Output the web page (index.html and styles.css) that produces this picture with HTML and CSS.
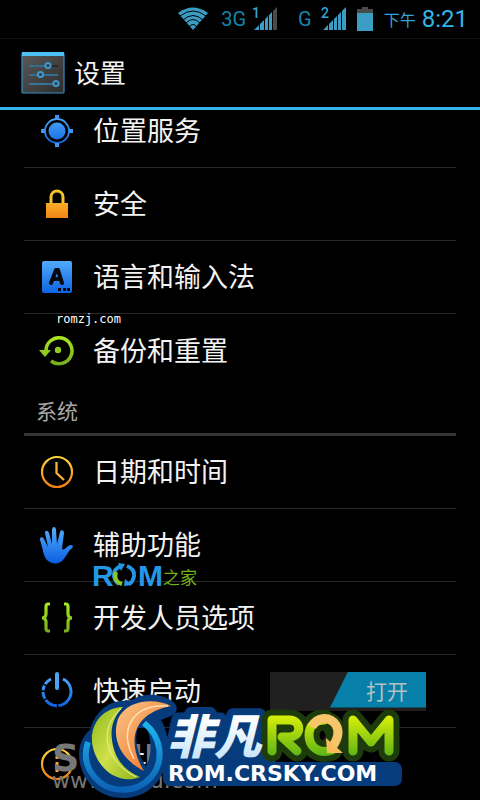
FILE: index.html
```
<!DOCTYPE html>
<html lang="zh-CN">
<head>
  <meta charset="UTF-8">
  <meta name="viewport" content="width=device-width, initial-scale=1.0">
  <title>设置</title>
  <link rel="stylesheet" href="styles.css">
</head>
<body>
  <!-- Shared gradients -->
  <svg class="defs" width="0" height="0" aria-hidden="true">
    <defs>
      <linearGradient id="blue" x1="0" y1="0" x2="0" y2="36" gradientUnits="userSpaceOnUse"><stop offset="0" stop-color="#55aefc"/><stop offset="1" stop-color="#0a5fe0"/></linearGradient>
      <linearGradient id="orange" x1="0" y1="0" x2="0" y2="36" gradientUnits="userSpaceOnUse"><stop offset="0" stop-color="#ffdc3c"/><stop offset="1" stop-color="#f07a10"/></linearGradient>
      <linearGradient id="green" x1="0" y1="0" x2="0" y2="36" gradientUnits="userSpaceOnUse"><stop offset="0" stop-color="#b0f01e"/><stop offset="1" stop-color="#6fa51c"/></linearGradient>
    </defs>
  </svg>

  <div class="screen">
    <div class="status-bar">
      <svg class="wifi" width="32" height="24" viewBox="0 0 32 24">
        <path d="M1 6Q16-5 31 6L16 23Z" fill="#3b9cc4"/>
        <path d="M3 9Q16-1 29 9M6 13Q16 4 26 13M9 16Q16 9 23 16M12 20Q16 15 20 20" fill="none" stroke="#000" stroke-width="1"/>
      </svg>
      <span class="network net-3g">3G</span>
      <svg class="signal" width="26" height="24" viewBox="0 0 26 24">
        <text x="0" y="11" class="sim">1</text>
        <path d="M2 23L7 18V23ZM8 17L12 13V23H8ZM13 12L16 9V23H13ZM17 8L20 5V23H17Z" fill="#3b9cc4"/>
        <path d="M21 4L25 0V23H21Z" fill="#4a4a4a"/>
      </svg>
      <span class="network net-g">G</span>
      <svg class="signal" width="26" height="24" viewBox="0 0 26 24">
        <text x="0" y="11" class="sim">2</text>
        <path d="M2 23L7 18V23ZM8 17L12 13V23H8ZM13 12L16 9V23H13ZM17 8L20 5V23H17ZM21 4L25 0V23H21Z" fill="#3b9cc4"/>
      </svg>
      <svg class="battery" width="16" height="24" viewBox="0 0 16 24">
        <path d="M5 0H11V2H16V6H0V2H5Z" fill="#4a4a4a"/>
        <path d="M0 6H16V24H0Z" fill="#3b9cc4"/>
      </svg>
      <span class="ampm">下午</span>
      <span class="clock">8:21</span>
    </div>

    <header class="title-bar">
      <svg width="44" height="42" viewBox="0 0 44 42">
        <defs><linearGradient id="panel" x1="0" y1="0" x2="1" y2="1"><stop offset="0" stop-color="#5a5a5a"/><stop offset="1" stop-color="#2c2c2c"/></linearGradient></defs>
        <rect x="1" y="1" width="42" height="40" rx="1" fill="url(#panel)" stroke="#348fc7" stroke-width="1.2"/>
        <path d="M1 0H43V4H1Z" fill="#4fc0f4"/>
        <path d="M8 14H37M8 23H37" stroke="#222" stroke-width="1.5"/>
        <path d="M8 14H24M8 23H17M22 23H37M8 32H32" stroke="#3585b5" stroke-width="1.5"/>
        <g fill="#343c42" stroke="#4197cc" stroke-width="2"><circle cx="27" cy="13.5" r="2.6"/><circle cx="19.5" cy="22.5" r="2.6"/><circle cx="35" cy="31.5" r="2.6"/></g>
      </svg>
      <h1>设置</h1>
    </header>

    <main class="settings">
      <ul class="list">
        <li><a href="#location">
          <svg class="icon" viewBox="0 0 36 36"><circle cx="18" cy="18" r="12" fill="none" stroke="url(#blue)" stroke-width="1.8"/><path d="M18 2V6M18 30V34M2 18H6M30 18H34" stroke="#3d96f5" stroke-width="4"/><circle cx="18" cy="18" r="8.5" fill="url(#blue)"/></svg>
          <span>位置服务</span></a></li>
        <li><a href="#security">
          <svg class="icon" viewBox="0 0 36 36"><path d="M12 18V11C12 3 24 3 24 11V18" fill="none" stroke="#f5c42c" stroke-width="3"/><path d="M7 17H29V32H7Z" fill="url(#orange)"/></svg>
          <span>安全</span></a></li>
        <li><a href="#language">
          <svg class="icon" viewBox="0 0 36 36"><rect x="3" y="2" width="30" height="32" rx="2" fill="url(#blue)"/><path d="M12 24L17 11H19L23 24M14 20H21" fill="none" stroke="#05070c" stroke-width="4" stroke-linecap="round" stroke-linejoin="round"/><path d="M19 29H22V32H19ZM24 29H27V32H24ZM28 29H31V32H28Z" fill="#05070c"/></svg>
          <span>语言和输入法</span></a></li>
        <li><a href="#backup">
          <svg class="icon" viewBox="0 0 36 36"><path d="M7 18A13 13 0 1 1 12 28" fill="none" stroke="url(#green)" stroke-width="3.5"/><path d="M0 17H12L6 24Z" fill="#8fcc1b"/><circle cx="19" cy="17" r="3.2" fill="#8fcc1b"/></svg>
          <span>备份和重置</span></a></li>
      </ul>

      <h2 class="section-title">系统</h2>

      <ul class="list">
        <li><a href="#date">
          <svg class="icon" viewBox="0 0 36 36"><circle cx="18" cy="18" r="15" fill="none" stroke="url(#orange)" stroke-width="2.2"/><path d="M17.5 8V19L25 26" fill="none" stroke="#f3b432" stroke-width="2.3"/></svg>
          <span>日期和时间</span></a></li>
        <li><a href="#accessibility">
          <svg class="icon" viewBox="0 0 36 36"><path d="M8 33C4 29 4 21 1 13C0 10 4 9 5 12L9 20L6 6C6 3 9 3 10 6L13 17L13 3C13-1 17-1 17 3L18 17L21 5C22 2 25 3 25 6L23 22C26 24 28 18 32 18C35 18 34 21 32 22C28 26 27 30 24 33C20 38 12 37 8 33Z" fill="url(#blue)"/></svg>
          <span>辅助功能</span></a></li>
        <li><a href="#developer">
          <svg class="icon" viewBox="0 0 36 36"><path d="M11 4H9Q7 4 7 7V14Q7 18 3 18Q7 18 7 22V28Q7 31 9 31H11M25 4H27Q29 4 29 7V14Q29 18 33 18Q29 18 29 22V28Q29 31 27 31H25" fill="none" stroke="url(#green)" stroke-width="3.2"/></svg>
          <span>开发人员选项</span></a></li>
        <li class="with-switch">
          <svg class="icon" viewBox="0 0 36 36"><path d="M24 6A14 14 0 1 1 12 6" fill="none" stroke="url(#blue)" stroke-width="3" stroke-dasharray="36 1.5 13 1.5 7 1.5 5 1.5 30"/><path d="M18 1V15" stroke="#4aa5fa" stroke-width="4" stroke-linecap="round"/></svg>
          <label for="fastBoot">快速启动</label>
          <span class="switch">
            <input type="checkbox" id="fastBoot" checked>
            <span class="thumb">打开</span>
          </span></li>
        <li><a href="#about">
          <svg class="icon" viewBox="0 0 36 36"><circle cx="18" cy="18" r="15" fill="none" stroke="url(#orange)" stroke-width="2.2"/><path d="M18 10V13M18 16V26" stroke="#f3a82c" stroke-width="3"/></svg>
          <span>关于手机</span></a></li>
      </ul>
    </main>

    <!-- Watermarks lie over the list -->
    <div class="mark mark-romzj">romzj.com</div>

    <svg class="mark mark-home" width="106" height="26" viewBox="0 0 106 26">
      <text x="-1" y="23" class="home-rom">R</text>
      <path d="M28 3Q20 6 21 13Q22 19 26 21" fill="none" stroke="#2597e8" stroke-width="4"/>
      <path d="M23 9Q20 18 29 21" fill="none" stroke="#8bc820" stroke-width="4"/>
      <path d="M34 3Q42 6 41 13Q40 19 36 21" fill="none" stroke="#2597e8" stroke-width="4"/>
      <path d="M25 0L32 1L28 8ZM31 23L32 16L39 22Z" fill="#2597e8"/>
      <text x="45" y="23" class="home-rom">M</text>
      <text x="70" y="21" class="home-cn">之家</text>
    </svg>

    <div class="mark mark-sohu"><b>SOHU</b><span>www.sohu.com</span></div>

    <svg class="mark mark-crsky" width="326" height="106" viewBox="0 0 326 106">
      <defs>
        <linearGradient id="lime" x1="0" y1="21" x2="0" y2="62" gradientUnits="userSpaceOnUse"><stop offset="0" stop-color="#dcf008"/><stop offset="1" stop-color="#5cb416"/></linearGradient>
        <linearGradient id="ice" x1="0" y1="0" x2="0" y2="1"><stop offset=".3" stop-color="#fff"/><stop offset="1" stop-color="#b9def7"/></linearGradient>
        <linearGradient id="leaf" x1="0" y1="0" x2="1" y2="1"><stop offset="0" stop-color="#8fb81c"/><stop offset=".5" stop-color="#d0e04a"/><stop offset="1" stop-color="#8cb51c"/></linearGradient>
        <linearGradient id="flame" x1="0" y1="0" x2="1" y2="1"><stop offset="0" stop-color="#fbc58a"/><stop offset="1" stop-color="#ec6a14"/></linearGradient>
        <linearGradient id="ring" x1="0" y1="0" x2="0" y2="1"><stop offset="0" stop-color="#1fb4ee"/><stop offset="1" stop-color="#0c62b4"/></linearGradient>
        <g id="rom">
          <path d="M194 57V26H211C224 26 224 43 211 43H204L219 57"/>
          <path d="M254 56C240 61 231 52 231 41C231 32 237 26 246 26"/>
          <path d="M275 57V26L293 48L311 26V57"/>
        </g>
      </defs>

      <path d="M1 60C1 48 7 40 12 36C16 21 27 9 42 7C48 7 50 6 54 6C66-2 84 0 94 7C101 12 100 19 93 22L83 26C92 40 93 67 82 84C73 98 60 104 45 104C19 104 1 84 1 60ZM60 34C56 45 59 60 68 72C74 62 74 44 68 34Z" fill="#063b7c" fill-rule="evenodd"/>
      <g fill="#063b7c" stroke="#063b7c" stroke-width="14" stroke-linejoin="round">
        <text x="89" y="60" class="crsky-cn" aria-hidden="true">非凡</text>
        <path d="M92 58H190V76H92ZM92 75H317V85H92Z"/>
      </g>
      <use href="#rom" fill="none" stroke="#1d3b0b" stroke-width="21" stroke-linecap="round" stroke-linejoin="round"/>
      <path d="M246 28C262 28 262 54 246 56" fill="none" stroke="#1d3b0b" stroke-width="21"/>
      <path d="M92 75H317V85H92Z" fill="#063b7c" stroke="#063b7c" stroke-width="10" stroke-linejoin="round"/>

      <path d="M66 29C84 43 86 67 74 82C58 101 29 100 15 81C7 71 6 60 10 48" fill="none" stroke="url(#ring)" stroke-width="6"/>
      <path d="M45 13C22 14 10 34 15 54C21 77 42 91 62 83C45 76 36 63 34 46C32 34 36 22 45 13Z" fill="url(#leaf)"/>
      <path d="M43 15C20 34 26 67 58 83" fill="none" stroke="#e9f29a"/>
      <path d="M93 12C75 3 48 7 40 25C33 46 44 66 66 77C49 49 53 20 93 12Z" fill="url(#flame)"/>
      <path d="M90 12C57 10 39 33 56 65" fill="none" stroke="#ffe1b5" stroke-width="1.5"/>

      <text x="89" y="60" class="crsky-cn" fill="url(#ice)">非凡</text>
      <use href="#rom" fill="none" stroke="url(#lime)" stroke-width="9" stroke-linecap="round" stroke-linejoin="round"/>
      <path d="M234 33C239 22 252 22 258 31C262 38 259 46 255 52" fill="none" stroke="#f8c56b" stroke-width="9"/>
      <path d="M248 44L265 59L249 59Z" fill="#f8bd5b"/>
      <text x="90" y="87" class="crsky-url">ROM.CRSKY.COM</text>
    </svg>
  </div>
</body>
</html>
```
FILE: styles.css
```
* {
  box-sizing: border-box;
}

body {
  margin: 0;
  background: #000;
  color: #f3f3f3;
  font-family: "Noto Sans CJK SC", sans-serif;
}

h1, h2, ul {
  margin: 0;
  padding: 0;
  font-weight: normal;
}

a {
  color: inherit;
  text-decoration: none;
}

svg {
  overflow: visible;
}

.defs {
  position: absolute;
}

.screen {
  position: relative;
  display: flex;
  flex-direction: column;
  height: 100vh;
  overflow: hidden;
}

/* Status bar */
.status-bar {
  display: flex;
  align-items: center;
  justify-content: flex-end;
  height: 38px;
  padding-right: 12px;
  color: #33a5d6;
  font-family: Roboto, "Noto Sans CJK SC", sans-serif;
}

.network {
  color: #1583ad;
  font-size: 20px;
}

.net-3g {
  margin: 0 6px 0 12px;
}

.net-g {
  margin: 0 9px 0 20px;
}

.sim {
  font-size: 14px;
  font-weight: 500;
  fill: #33a5d6;
}

.battery {
  margin: 0 11px 0 10px;
}

.ampm {
  font-size: 16px;
}

.clock {
  margin-left: 6px;
  color: #33b5e5;
  font-size: 24px;
}

/* Title */
.title-bar {
  display: flex;
  align-items: center;
  gap: 9px;
  height: 72px;
  padding: 0 21px;
  border-top: 1px solid #111;
  border-bottom: 3px solid #33b5e5;
}

h1 {
  padding-bottom: 3px;
  font-size: 26px;
}

/* List */
.settings {
  flex: 1;
  min-height: 0;
  padding: 0 24px;
  overflow: hidden;
}

.list {
  list-style: none;
}

.list:first-child {
  margin-top: -15px;
}

.list li {
  height: 73px;
  border-bottom: 1px solid #282828;
}

.list:first-child li:last-child {
  border-bottom: none;
}

.list a,
.with-switch {
  display: flex;
  align-items: center;
  gap: 18px;
  height: 100%;
  padding-left: 15px;
  font-size: 27px;
}

.list a span,
.with-switch label {
  padding-bottom: 3px;
}

.icon {
  flex: none;
  width: 36px;
  height: 36px;
}

.section-title {
  height: 49px;
  padding-left: 12px;
  border-bottom: 3px solid #363636;
  color: #a8a8a8;
  font-size: 21px;
  line-height: 46px;
}

.switch {
  position: relative;
  width: 156px;
  height: 39px;
  margin-left: auto;
  margin-right: 30px;
  background: #202020;
}

.switch input {
  position: absolute;
  inset: 0;
  width: 100%;
  height: 100%;
  margin: 0;
  opacity: 0;
}

.thumb {
  display: block;
  height: 36px;
  margin-left: 60px;
  padding-left: 36px;
  background: #0780a9;
  clip-path: polygon(18px 0, 100% 0, 100% 100%, 0 100%);
  color: #b4c0c4;
  font-size: 21px;
  line-height: 36px;
}

/* Watermarks */
.mark {
  position: absolute;
  pointer-events: none;
}

.mark-romzj {
  left: 56px;
  top: 312px;
  color: #fff;
  font: 12px/14px "DejaVu Sans Mono", monospace;
}

.mark-home {
  left: 93px;
  top: 563px;
}

.home-rom {
  font: bold 30px "Liberation Sans", sans-serif;
  fill: #2597e8;
}

.home-cn {
  font-size: 17px;
  fill: #74b314;
}

.mark-sohu {
  left: 52px;
  bottom: 8px;
  display: flex;
  flex-direction: column;
  color: #777;
  font: 22px/22px "DejaVu Sans", sans-serif;
}

.mark-sohu b {
  font-size: 38px;
  line-height: 24px;
}

.mark-crsky {
  left: 78px;
  bottom: 0;
}

.crsky-cn {
  font-size: 47px;
  font-style: italic;
  font-weight: 900;
}

.crsky-url {
  font: bold 22px "DejaVu Sans", sans-serif;
  fill: #fff;
}
```
